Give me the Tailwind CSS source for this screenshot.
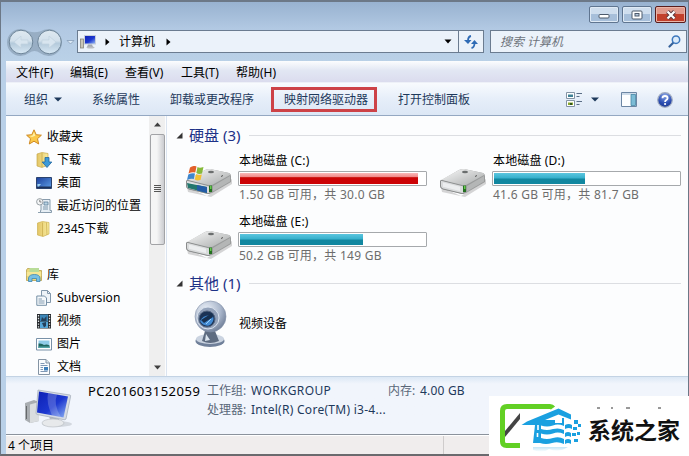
<!DOCTYPE html>
<html lang="zh-CN">
<head>
    <meta charset="UTF-8">
    <meta name="viewport" content="width=device-width, initial-scale=1.0">
    <title>计算机</title>
    <script src="https://cdn.jsdelivr.net/npm/@tailwindcss/browser@4"></script>
</head>
<body class="overflow-hidden font-['Noto_Sans','Noto_Sans_CJK_SC',sans-serif] text-[12px] leading-4 text-black">

    <!-- Shared gradients and the drive icon -->
    <svg class="absolute w-0 h-0" aria-hidden="true">
        <defs>
            <linearGradient id="metal" x1="0" y1="0" x2="1" y2="1">
                <stop offset="0" stop-color="#fafafa"/><stop offset="1" stop-color="#a5a8a8"/>
            </linearGradient>
            <linearGradient id="folder" x1="0" y1="0" x2="1" y2="0">
                <stop offset="0" stop-color="#e3c565"/><stop offset="1" stop-color="#f8ec9f"/>
            </linearGradient>
            <linearGradient id="screen" x1="0" y1="0" x2="1" y2="1">
                <stop offset="0" stop-color="#0d20b4"/><stop offset=".55" stop-color="#1c37d0"/><stop offset="1" stop-color="#8fb4f4"/>
            </linearGradient>
            <linearGradient id="desk" x1="0" y1="0" x2="1" y2="1">
                <stop offset="0" stop-color="#1b3f9c"/><stop offset="1" stop-color="#5fa0e8"/>
            </linearGradient>
            <linearGradient id="orb" x1="0" y1="0" x2="0" y2="1">
                <stop offset="0" stop-color="#dfe9f1"/><stop offset=".45" stop-color="#d2e0eb"/><stop offset=".55" stop-color="#b4cadb"/><stop offset="1" stop-color="#d8e8f4"/>
            </linearGradient>
            <radialGradient id="ball" cx=".35" cy=".3" r=".8">
                <stop offset="0" stop-color="#eef3fa"/><stop offset=".6" stop-color="#a9b6cb"/><stop offset="1" stop-color="#66758f"/>
            </radialGradient>
            <radialGradient id="help" cx=".5" cy=".2" r=".9">
                <stop offset="0" stop-color="#8aa6e8"/><stop offset=".6" stop-color="#2a4cb0"/><stop offset="1" stop-color="#1b3486"/>
            </radialGradient>
            <symbol id="drive" viewBox="0 0 48 30">
                <path d="M2 20 22 29 47 12 47 17 26 30 3 25z" fill="#777" opacity=".3"/>
                <path d="M1 14 20 3Q22 2 25 2L44 6Q46 7 46 9V15L27 26Q25 27 23 27L3 22Q1 21 1 19z" fill="#9a9c9c"/>
                <path d="M2 13 20 3Q22 2 25 2L44 6Q46 7 45 8L27 18Q25 19 23 19z" fill="url(#metal)"/>
                <path d="M1.500 14Q1.500 13 3 13.500L23 18.500Q25 19 25 20V25Q25 27 23 26.500L4 22Q1.500 21 1.500 19z" fill="#d9dbdc" stroke="#7d8080" stroke-width=".8"/>
                <path d="M4 15.500 21 19.800V24L4 19.800z" fill="#eceeef"/>
                <path d="M28 19 45 9V14.500L28 24.500z" fill="#b4b6b6"/>
                <path d="M24 18.500h3v6.500h-3z" fill="#247020"/><path d="M25.200 19h1.200v3h-1.200z" fill="#7be05c"/>
                <ellipse cx="26" cy="5" rx="3" ry="1.200" fill="#6b6e6e"/><path d="M36 9.500 38 8.500" stroke="#555"/>
            </symbol>
        </defs>
    </svg>

    <div class="relative flex flex-col w-[689px] h-[456px] overflow-hidden bg-[#b9d0e8] border border-t-2 border-b-2 border-[#6c7887] border-b-[#6a6a6e] pl-[5px]">

        <!-- Title bar -->
        <header class="-ml-[5px] h-[27px] shrink-0 flex justify-end gap-[3px] pt-1 pr-[2px] bg-linear-to-b from-[#98b2d0] to-[#b2c9e3]">
            <button class="w-[30px] h-[17px] flex items-center justify-center rounded-[2px] border border-[#5f7590] bg-linear-to-b from-[#cfdeee] from-50% to-[#a7bfda] to-50% shadow-[inset_0_0_0_1px_#dfeaf5]">
                <svg class="mt-[3px]" width="12" height="6"><rect x="1" y="1.500" width="10" height="3.500" rx="1" fill="#fff" stroke="#4d5a6b"/></svg>
            </button>
            <button class="w-[30px] h-[17px] flex items-center justify-center rounded-[2px] border border-[#5f7590] bg-linear-to-b from-[#cfdeee] from-50% to-[#a7bfda] to-50% shadow-[inset_0_0_0_1px_#dfeaf5]">
                <svg width="12" height="10"><rect x="1" y="1" width="10" height="8" rx="1" fill="#fff" stroke="#4d5a6b"/><rect x="4" y="3.500" width="4" height="2.500" fill="#b8cadf" stroke="#4d5a6b"/></svg>
            </button>
            <button class="w-[31px] h-[17px] flex items-center justify-center rounded-[2px] border border-[#5a1c1c] bg-linear-to-b from-[#e0998c] from-50% to-[#c2402c] to-50% shadow-[inset_0_0_0_1px_#eab5a8]">
                <svg width="12" height="10" fill="none"><path d="M2.500 1.500 9.500 8.500M9.500 1.500 2.500 8.500" stroke="#5d3a40" stroke-width="4"/><path d="M2.500 1.500 9.500 8.500M9.500 1.500 2.500 8.500" stroke="#fff" stroke-width="2.200"/></svg>
            </button>
        </header>

        <!-- Navigation row -->
        <div class="-ml-[5px] h-8 shrink-0 flex items-start pt-px pl-[6px] bg-linear-to-b from-[#b2c9e3] to-[#bad1e7]">
            <svg class="-mt-px shrink-0" width="57" height="27" viewBox="0 0 57 27">
                <path d="M13.500 0Q18 0 22 2.500Q27.500 4 33 2.500Q37 0 41.500 0A13.500 13.500 0 0 1 41.500 27Q37 27 33 24Q27.500 20 22 24Q18 27 13.500 27A13.500 13.500 0 0 1 13.500 0z" fill="#98aec4"/>
                <circle cx="14" cy="13" r="11.800" fill="url(#orb)" stroke="#6e8599"/>
                <circle cx="42.500" cy="13" r="11.800" fill="url(#orb)" stroke="#6e8599"/>
                <path d="M7 13 14 7V11H21V15H14V19zM49 13 42 7V11H35V15H42V19z" fill="#d8e5ef" stroke="#c2d3e0" stroke-width=".7"/>
            </svg>
            <svg class="mt-[9px] ml-[2px] shrink-0" width="10" height="7"><path d="M1 1.500H8L4.500 5z" fill="#dce9f5" stroke="#879db8" stroke-width=".8"/></svg>
            <div class="ml-px w-[407px] h-[23px] flex items-center border border-[#6b7c90] bg-[#ebf2fa] shrink-0">
                <svg class="ml-[2px]" width="17" height="16" viewBox="0 0 17 16">
                    <rect x=".5" y="5" width="3" height="9" fill="#c9c6b8" stroke="#84847c" stroke-width=".8"/>
                    <path d="M4 1H16V10.500H4z" fill="#c6cedb"/><path d="M5 2H15V9.500H5z" fill="url(#screen)"/>
                    <path d="M8 10.500H12L13 13H7z" fill="#a4a9b2"/><ellipse cx="10.500" cy="13.500" rx="4" ry="1" fill="#b9bcc2"/>
                </svg>
                <svg class="ml-[8px]" width="5" height="8"><path d="M.5.5 4.500 4 .5 7.500z"/></svg>
                <span class="ml-[9px] w-9 whitespace-nowrap">计算机</span>
                <svg class="ml-[11px]" width="5" height="8"><path d="M.5.5 4.500 4 .5 7.500z"/></svg>
                <svg class="ml-auto mr-[6px]" width="8" height="5"><path d="M.5.5H7.500L4 4.500z"/></svg>
                <span class="w-[25px] h-full flex items-center justify-center border-l border-[#6b7c90]">
                    <svg width="14" height="14" viewBox="0 0 14 14" fill="none" stroke="#2f6bb5" stroke-width="1.800"><path d="M7 1Q4 1.500 4 6"/><path d="M0 5H7.500L4 9z" fill="#2f6bb5" stroke="none"/><path d="M7.500 13Q10.500 12.500 10.500 8"/><path d="M7 9H14L10.500 5z" fill="#2f6bb5" stroke="none"/></svg>
                </span>
            </div>
            <div class="ml-[6px] w-[197px] h-[23px] flex items-center justify-between pl-[9px] pr-[5px] border border-[#6b7c90] bg-[#ebf2fa] shrink-0">
                <span class="italic text-[#6e747c]">搜索 计算机</span>
                <svg width="13" height="13" viewBox="0 0 13 13" fill="none"><path d="M5.500 7.500 1.500 11.500" stroke="#35619a" stroke-width="2.200" stroke-linecap="round"/><circle cx="8" cy="4.700" r="3.700" fill="#dcebfa" stroke="#3d78bd" stroke-width="1.500"/></svg>
            </div>
        </div>

        <!-- Menu bar -->
        <nav class="h-[22px] shrink-0 flex items-center pl-[10px] gap-4 pt-[2px] bg-linear-to-b from-[#fcfdfe] via-[#e2e7f3] via-45% to-[#dbdcee] border-b border-[#eef1f8] whitespace-nowrap">
            <span class="w-[38px]">文件(F)</span>
            <span class="w-[39px]">编辑(E)</span>
            <span class="w-[40px]">查看(V)</span>
            <span class="w-[39px]">工具(T)</span>
            <span>帮助(H)</span>
        </nav>

        <!-- Command bar -->
        <div class="h-[33px] shrink-0 flex items-center pt-px bg-linear-to-b from-[#f8fbfe] via-[#e6eef9] via-50% to-[#dce7f5] border-b border-[#94a8c2] text-[#1e395b] whitespace-nowrap">
            <span class="ml-[18px] w-6">组织</span>
            <svg class="ml-[6px]" width="8" height="5"><path d="M0 .5H8L4 4.500z" fill="#1e395b"/></svg>
            <span class="ml-[30px] w-12">系统属性</span>
            <span class="ml-[30px] w-[84px]">卸载或更改程序</span>
            <span class="ml-[17px] w-[106px] h-[25px] flex items-center pl-[10px] border-[3px] border-[#cd4247]">映射网络驱动器</span>
            <span class="ml-[21px] w-[72px]">打开控制面板</span>
            <svg class="ml-[96px]" width="17" height="17" viewBox="0 0 17 17">
                <path d="M.5 1.500H8.500V7.500H.5zM.5 9.500H8.500V15.500H.5z" fill="#fff" stroke="#8494a4"/>
                <path d="M2 3.500H7V6H2z" fill="#3f8195"/><path d="M2 11.500H7V14H2z" fill="#8aa82c"/><path d="M4 12H6V14H4z" fill="#33551e"/>
                <path d="M10.500 2.500H16M10.500 5.500H13.500M10.500 10.500H16M10.500 13.500H13.500" stroke="#5b6e86"/>
            </svg>
            <svg class="ml-[8px]" width="8" height="5"><path d="M0 .5H8L4 4.500z" fill="#1e395b"/></svg>
            <svg class="ml-[22px]" width="16" height="15" viewBox="0 0 16 15"><path d="M.5.5H15.500V14.500H.5z" fill="#fdfeff" stroke="#6c86a4"/><path d="M1 1H15V3H1z" fill="#cddbe9"/><path d="M10 2.500H14.500V13.500H10z" fill="#7cbcd6" stroke="#4486a4" stroke-width=".8"/></svg>
            <svg class="ml-[20px]" width="16" height="16" viewBox="0 0 16 16"><circle cx="8" cy="8" r="7.300" fill="url(#help)" stroke="#a4aec2" stroke-width="1.200"/><path d="M5.500 6.300Q5.500 4 8 4 10.600 4 10.600 6.200 10.600 7.300 9 8.200 8.100 8.800 8.100 9.900" fill="none" stroke="#fff" stroke-width="1.800"/><circle cx="8.100" cy="12" r="1.100" fill="#fff"/></svg>
        </div>

        <main class="h-[260px] shrink-0 flex bg-[#fcfdfe]">
            <!-- Navigation pane -->
            <aside class="w-[143px] pt-[9px] flex flex-col overflow-hidden whitespace-nowrap">
                <div class="h-[23px] shrink-0 flex items-center pl-5 gap-[5px]">
                    <svg width="16" height="16" viewBox="0 0 16 16"><path d="M8 .8 10.200 5.700 15.400 6.200 11.500 9.700 12.700 15 8 12.200 3.300 15 4.500 9.700.6 6.200 5.800 5.700z" fill="#fbc94a" stroke="#cf8a24" stroke-linejoin="round"/><path d="M8 3 9.300 6.800 6 8 3.500 7 6.500 6.600z" fill="#fff0a8"/></svg>
                    <span>收藏夹</span>
                </div>
                <div class="h-[23px] shrink-0 flex items-center pl-[30px] gap-[5px]">
                    <svg width="16" height="16" viewBox="0 0 16 16"><path d="M1 2 6 .5 12 1.500V13L6 15.500 1 14z" fill="url(#folder)" stroke="#c7a94c" stroke-width=".7"/><path d="M6 1V15" stroke="#c7a94c" stroke-width=".8"/><path d="M9 5.500H13V10H15.800L11 15.500 6.200 10H9z" fill="#3c9ad8" stroke="#1f669f" stroke-width=".8"/></svg>
                    <span>下载</span>
                </div>
                <div class="h-[23px] shrink-0 flex items-center pl-[30px] gap-[5px]">
                    <svg width="16" height="16" viewBox="0 0 16 16"><path d="M.5 2.500H15.500V13.500H.5z" fill="url(#desk)" stroke="#2b436e"/><path d="M1 11.500H15V13H1z" fill="#1c3159"/><path d="M1.500 9H5L3 11.500H1.500z" fill="#9dd2f0"/></svg>
                    <span>桌面</span>
                </div>
                <div class="h-[23px] shrink-0 flex items-center pl-[30px] gap-[5px]">
                    <svg width="16" height="16" viewBox="0 0 16 16"><path d="M5 1.500H14V12.500H15.500V14.500H4.500V12.500H5z" fill="#e6eef4" stroke="#7c92a4" stroke-width=".9"/><path d="M8 4H12V7H8zM7 9H12M7 11H12" fill="#b9d4e4" stroke="#5f8299" stroke-width=".8"/><circle cx="3.800" cy="3.800" r="3.200" fill="#f4f6f7" stroke="#8f979d" stroke-width=".9"/><path d="M3.800 1.800V4H5.500" fill="none" stroke="#666" stroke-width=".8"/><path d="M2 14.500H8" stroke="#8da1b0"/></svg>
                    <span>最近访问的位置</span>
                </div>
                <div class="h-[23px] shrink-0 flex items-center pl-[30px] gap-[5px]">
                    <svg width="16" height="16" viewBox="0 0 16 16"><path d="M1.500 2 6.500.5 13 1.500V13L7 15.500 1.500 14z" fill="url(#folder)" stroke="#cdb153" stroke-width=".7"/><path d="M6.500 1.500V15.200M10.500 1.500 11 14" stroke="#cbae50" stroke-width=".8"/></svg>
                    <span>2345下载</span>
                </div>
                <div class="h-[23px] shrink-0 mt-[23px] flex items-center pl-5 gap-[5px]">
                    <svg width="16" height="16" viewBox="0 0 16 16"><path d="M.5 3V13.500H15.500V3.500H9L7.500 1.500H1.500z" fill="#eed97c" stroke="#b9a04a" stroke-width=".8"/><path d="M3.500 1H13V5H3.500z" fill="#b8dc98"/><path d="M.8 5H15.200V9H.8z" fill="#f6e795"/><path d="M2.500 14.500V11Q3 7.500 8.500 7.500 13.500 7.500 14 11V14.500H10.500V11.500H6V14.500z" fill="#77c0e4" stroke="#3e86b0" stroke-width=".8"/></svg>
                    <span>库</span>
                </div>
                <div class="h-[23px] shrink-0 flex items-center pl-[30px] gap-[5px]">
                    <svg width="16" height="16" viewBox="0 0 16 16"><path d="M5.500.5H11.500L14.500 3.500V12.500H5.500z" fill="#edf3f8" stroke="#8298ac"/><path d="M11.500.5V3.500H14.500" fill="none" stroke="#8298ac"/><path d="M.8 6H8.500L10.500 8V15.300H.8z" fill="#f5f9fc" stroke="#7690a6"/><path d="M2.500 9H6M2.500 11H8.500M2.500 13H8.500" stroke="#7790a8" stroke-width=".9"/></svg>
                    <span class="tracking-[.1px]">Subversion</span>
                </div>
                <div class="h-[23px] shrink-0 flex items-center pl-[30px] gap-[5px]">
                    <svg width="16" height="16" viewBox="0 0 16 16"><path d="M1 1H15V15.500H1z" fill="#25282c"/><path d="M4 1.500H12V8H4z" fill="#3b86b8"/><path d="M4 8.500H12V15H4z" fill="#55a6d8"/><path d="M6 4 8 6 10.500 3V8H5zM6 10 10 9V13L8 14.500z" fill="#243f59"/><path d="M2.500 2V15M13.500 2V15" stroke="#e4e7ea" stroke-width="1.300" stroke-dasharray="1.400 1.400"/></svg>
                    <span>视频</span>
                </div>
                <div class="h-[23px] shrink-0 flex items-center pl-[30px] gap-[5px]">
                    <svg width="16" height="16" viewBox="0 0 16 16"><path d="M.5 2.500H15.500V14H.5z" fill="#fff" stroke="#7891a8"/><path d="M2.500 4.500H13.500V12H2.500z" fill="#8fcbe8"/><path d="M2.500 7.500Q6 7 8 9 11 8 13.500 9.500V12H2.500z" fill="#1f665f"/><path d="M2.500 10.500H13.500V12H2.500z" fill="#54a5a8"/></svg>
                    <span>图片</span>
                </div>
                <div class="h-[23px] shrink-0 flex items-center pl-[30px] gap-[5px]">
                    <svg width="16" height="16" viewBox="0 0 16 16"><path d="M2.500.5H10L13.500 4V15.500H2.500z" fill="#fbfcfe" stroke="#8494a4"/><path d="M10 .5V4H13.500" fill="#dce5ee" stroke="#8494a4"/><path d="M4.500 4.500H8.500M4.500 6.500H11.500M4.500 8.500H7M4.500 10.500H7M4.500 12.500H11.500" stroke="#8098b4"/><path d="M8 8H12V11.500H8z" fill="#3d7fba"/></svg>
                    <span>文档</span>
                </div>
            </aside>

            <!-- Scrollbar -->
            <div class="w-4 flex flex-col items-center bg-[#efefef]">
                <svg class="mt-[6px]" width="7" height="5"><path d="M0 4.500 3.500.5 7 4.500z" fill="#404040"/></svg>
                <div class="mt-[7px] w-[15px] h-[111px] shrink-0 flex flex-col items-center justify-center gap-px pb-0.5 rounded-[2px] border border-[#a2a3a6] bg-linear-to-r from-[#f5f5f5] from-45% to-[#cbccd0]">
                    <i class="block w-[7px] h-px bg-[#555]"></i><i class="block w-[7px] h-px bg-[#555]"></i><i class="block w-[7px] h-px bg-[#555]"></i><i class="block w-[7px] h-px bg-[#555]"></i>
                </div>
                <svg class="mt-auto mb-[6px]" width="7" height="5"><path d="M0 .5H7L3.500 4.500z" fill="#404040"/></svg>
            </div>
            <div class="w-[2px] border-r border-[#dbe4f0]"></div>

            <!-- Drive list -->
            <section class="flex-1 pl-2 pr-[7px] whitespace-nowrap">
                <div class="mt-[9px] h-5 flex items-center">
                    <svg class="mr-[6px] ml-px" width="7" height="7"><path d="M6.500.5V6.500H.5z" fill="#333"/></svg>
                    <h2 class="w-[60px] text-[15px] leading-5 text-[#1e3287] -mt-px">硬盘 (3)</h2>
                    <i class="flex-1 h-px bg-[#dcdee2]"></i>
                </div>
                <div class="mt-[8px] pl-[10px] grid grid-cols-[254px_1fr]">
                    <div class="h-[62px] flex">
                        <svg class="mt-[13px] mr-[6px] shrink-0" width="48" height="32" viewBox="0 0 48 32">
                            <use href="#drive" x="0" y="1" width="48" height="30"/>
                            <path d="M2 17 22 21V27L3 22z" fill="#23776d"/><path d="M12 19 22 21V27L12 24.500z" fill="#245ca6"/>
                            <path d="M5 1.500Q9-1 11.500.5L10.300 6.500Q7 5.500 3.500 7.500z" fill="#e2602b"/><path d="M12.500 1Q14.500 2.500 18.500 1L17 7.500Q13.500 8.500 11.300 7z" fill="#86ba3a"/>
                            <path d="M3.300 8.500Q7 6.500 10 7.500L8.800 13Q6 12 2 14z" fill="#3f86cc"/><path d="M11 8Q13.500 9.500 16.800 8.500L15.500 14Q12 15 9.800 13.500z" fill="#f2c034"/>
                        </svg>
                        <div>
                            <p class="tracking-[.15px]">本地磁盘 (C:)</p>
                            <div class="-ml-px mt-[2px] w-[189px] h-[15px] p-px border border-[#a6a9ac] rounded-[1px] bg-white">
                                <div class="w-[178px] h-full bg-linear-to-b from-[#f9b9b9] via-[#ef8182] via-40% to-[#cc0306] to-41%"></div>
                            </div>
                            <p class="mt-px text-[#6d6d6d] tracking-[.25px]">1.50 GB 可用，共 30.0 GB</p>
                        </div>
                    </div>
                    <div class="h-[62px] flex">
                        <svg class="mt-[14px] mr-[6px] shrink-0" width="48" height="30"><use href="#drive"/></svg>
                        <div>
                            <p class="tracking-[.15px]">本地磁盘 (D:)</p>
                            <div class="-ml-px mt-[2px] w-[189px] h-[15px] p-px border border-[#a6a9ac] rounded-[1px] bg-white">
                                <div class="w-[91px] h-full bg-linear-to-b from-[#5bc6df] via-[#35b0cc] via-45% to-[#1187a0] to-55%"></div>
                            </div>
                            <p class="mt-px text-[#6d6d6d] tracking-[.25px]">41.6 GB 可用，共 81.7 GB</p>
                        </div>
                    </div>
                    <div class="h-[57px] flex -mt-px">
                        <svg class="mt-[15px] mr-[6px] shrink-0" width="48" height="30"><use href="#drive"/></svg>
                        <div>
                            <p class="tracking-[.15px]">本地磁盘 (E:)</p>
                            <div class="-ml-px mt-[2px] w-[189px] h-[15px] p-px border border-[#a6a9ac] rounded-[1px] bg-white">
                                <div class="w-[123px] h-full bg-linear-to-b from-[#5bc6df] via-[#35b0cc] via-45% to-[#1187a0] to-55%"></div>
                            </div>
                            <p class="mt-px text-[#6d6d6d] tracking-[.25px]">50.2 GB 可用，共 149 GB</p>
                        </div>
                    </div>
                </div>
                <div class="mt-[2px] h-5 flex items-center">
                    <svg class="mr-[6px] ml-px" width="7" height="7"><path d="M6.500.5V6.500H.5z" fill="#333"/></svg>
                    <h2 class="w-[60px] text-[15px] leading-5 text-[#1e3287] -mt-px">其他 (1)</h2>
                    <i class="flex-1 h-px bg-[#dcdee2]"></i>
                </div>
                <div class="mt-[6px] pl-[19px] flex items-center">
                    <svg class="mr-[12px]" width="33" height="50" viewBox="0 0 33 50">
                        <ellipse cx="16" cy="42" rx="14.500" ry="6" fill="#70809a"/><ellipse cx="16" cy="40" rx="14" ry="5" fill="#cbd4e1"/>
                        <path d="M11 32H21L25 42Q16 46 8 42z" fill="#5e6c81"/><path d="M12 35 16 41 11 42z" fill="#dae4ee"/>
                        <circle cx="16.500" cy="17.500" r="15.500" fill="url(#ball)" stroke="#8592a9" stroke-width=".6"/>
                        <circle cx="14" cy="19" r="11" fill="#93a2ba" stroke="#d9e2ee"/>
                        <circle cx="13" cy="20" r="8" fill="#1b3356" stroke="#52647f"/>
                        <path d="M6 22Q10 15 19 17Q21 23 15 26.500Q9 27.500 6 22z" fill="#438bd3"/><path d="M7 21 18 14 19 18 10 24z" fill="#173050"/><path d="M12 25 17 20" stroke="#9bd0f8"/>
                    </svg>
                    <span>视频设备</span>
                </div>
            </section>
        </main>

        <!-- Details pane -->
        <div class="h-[59px] shrink-0 flex pl-[19px] pt-[6px] bg-linear-to-b from-[#dce8f5] to-[#f1f5fc] to-12% border-t border-[#c3d3e4] border-b border-b-[#8b929c] whitespace-nowrap">
            <svg class="mt-[6px] shrink-0" width="49" height="40" viewBox="0 0 49 40">
                <ellipse cx="32" cy="35" rx="15" ry="3" fill="#a7adb5" opacity=".4"/>
                <path d="M0 14 9 11 14 13V32L5 34 0 31z" fill="#a9adb1"/><path d="M5 15.500 14 13V32L5 34z" fill="#dadddf"/><path d="M1.500 17V30" stroke="#66696c"/>
                <path d="M24 27 34 30V34H26z" fill="#b6bbc3"/><ellipse cx="28" cy="34" rx="11" ry="4" fill="#e7e9eb" stroke="#b5bac0" stroke-width=".6"/>
                <path d="M13 1 45 6Q46 6 45.500 8L41 30Q40 31 39 30.700L12 25.500Q11 25 11 24z" fill="#d7dce4" stroke="#959fac" stroke-width=".6"/>
                <path d="M14 2.500 43 7.500 38.500 28.500 12 23.500z" fill="url(#screen)"/><path d="M23 4 32 5.500Q28 16 36 28L27 26.500Q21 14 23 4z" fill="#fff" opacity=".2"/>
            </svg>
            <p class="ml-[14px] w-[119px] text-[13px] tracking-[.5px]">PC201603152059</p>
            <div class="grid grid-cols-[44px_137px_32px_auto] content-start gap-y-[3px] text-[#1e395b]">
                <span class="text-[#5a6779]">工作组:</span>
                <span class="tracking-[.4px]">WORKGROUP</span>
                <span class="text-[#5a6779]">内存:</span>
                <span class="tracking-[.2px]">4.00 GB</span>
                <span class="text-[#5a6779]">处理器:</span>
                <span class="tracking-[.28px]">Intel(R) Core(TM) i3-4...</span>
            </div>
        </div>

        <!-- Status bar -->
        <footer class="flex-1 flex items-center bg-[#f0eded] border-t border-white">
            <span class="pl-[2px] pt-[2px] w-[438px] h-full flex items-center border-r border-[#cfcccc]">4 个项目</span>
        </footer>
    </div>

    <!-- Site badge over the bottom right corner -->
    <div class="absolute left-[489px] top-[396px] w-[200px] h-[60px] overflow-hidden bg-white flex items-start">
        <svg class="shrink-0" width="99" height="60" viewBox="0 0 99 60">
            <defs><linearGradient id="fade" x1="0" y1="0" x2="0" y2="1"><stop offset="0" stop-color="#9bd5f0"/><stop offset="1" stop-color="#fff"/></linearGradient></defs>
            <path d="M64 12Q63 10.500 61 10.500H18Q13.500 10.500 13.500 15V45.500Q13.500 49.500 17.500 49.500H31" fill="none" stroke="#62d024" stroke-width="5"/>
            <path d="M31 17V23L16 41V35z" fill="#444"/>
            <path d="M69.500 12.500 82 18.500V23.500L69.500 18.500 56 24H66V27H73V22H75V30Q69 27.500 64 29.500 58 31.500 52 29.500V33Q58 35 64 33 70 31.500 75 34V38Q69 35.500 64 37.500 58 39.500 52 37.500V42Q58 44 64 42 70 40 75 43V48Q69 45 63 47 57 49 51 47H44L46 29H32.500L38 25.500z" fill="#1aa0e0"/>
            <path d="M49 29V34M48.500 37V41" stroke="#fff" stroke-width="1.600"/>
            <path d="M76 29Q80 27 83 29V33Q80 31 76 33zM76 37Q79 35 82 37V41Q79 39 76 41zM76 44Q79 42 82 44V48Q79 46 76 48zM85 24H89V28H85zM84 31H88V34H84zM83 37H87V40H83zM85 43H89V46H85zM89 28H92V31H89zM88 36H91V39H88z" fill="#1aa0e0"/>
            <path d="M44 51H79Q70 57 60 53 54 58 44 54z" fill="url(#fade)" opacity=".6"/>
        </svg>
        <span class="mt-[17px] text-[23px] leading-8 font-bold text-[#111] font-['Noto_Sans_CJK_SC',sans-serif] whitespace-nowrap">系统之家</span>
        <svg class="absolute left-[107px] top-[11px]" width="70" height="2"><path d="M1 1H4M15 1H17M30 1H34M62 1H65" stroke="#333"/></svg>
    </div>
</body>
</html>
